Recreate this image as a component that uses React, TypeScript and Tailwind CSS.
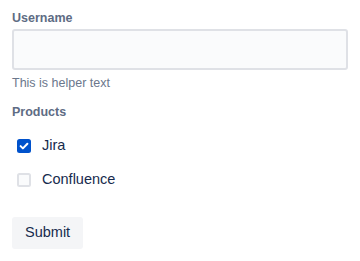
import React, { useState } from 'react';

const font = { fontFamily: '"Liberation Sans", Arial, sans-serif' };

const CheckIcon = ({ checked }: { checked: boolean }) => (
  <svg width="24" height="24" viewBox="0 0 24 24" className="shrink-0">
    {checked ? (
      <>
        <rect x="5" y="5" width="14" height="14" rx="2.5" fill="#0052cc" />
        <path d="M8.6 12.1l2.3 2.3 4.5-4.6" fill="none" stroke="#fff" strokeWidth="2" strokeLinecap="round" strokeLinejoin="round" />
      </>
    ) : (
      <rect x="6" y="6" width="12" height="12" rx="1.5" fill="#fafbfc" stroke="#dfe1e6" strokeWidth="2" />
    )}
  </svg>
);

const App = () => {
  const [products, setProducts] = useState({ jira: true, confluence: false });
  const items = [
    { key: 'jira' as const, label: 'Jira' },
    { key: 'confluence' as const, label: 'Confluence' },
  ];

  return (
    <div className="w-[360px] h-[261px] bg-white px-3 pt-[10px]" style={font}>
      {/* Username */}
      <label className="block text-[12.5px] leading-[16px] font-bold text-[#5e6c84]">Username</label>
      <input
        className="mt-[3px] block w-full h-[41px] rounded-[3px] border-2 border-[#dfe1e6] bg-[#fafbfc] px-2 text-[14px] text-[#172b4d] outline-none"
      />
      <div className="mt-[5px] text-[12.5px] leading-[16px] text-[#6b778c]">This is helper text</div>

      {/* Products */}
      <div className="mt-[13px] text-[12.5px] leading-[16px] font-bold text-[#5e6c84]">Products</div>
      <div className="mt-[14px] flex flex-col gap-[10px]">
        {items.map((item) => (
          <label key={item.key} className="flex items-center h-[24px] cursor-pointer">
            <input
              type="checkbox"
              className="hidden"
              checked={products[item.key]}
              onChange={() => setProducts({ ...products, [item.key]: !products[item.key] })}
            />
            <CheckIcon checked={products[item.key]} />
            <span className="ml-[6px] text-[14.5px] text-[#172b4d]">{item.label}</span>
          </label>
        ))}
      </div>

      {/* Submit */}
      <button className="mt-[25px] h-[32px] px-[13px] rounded-[3px] bg-[#f4f5f7] text-[14.5px] text-[#172b4d]">
        Submit
      </button>
    </div>
  );
};

export default App;
